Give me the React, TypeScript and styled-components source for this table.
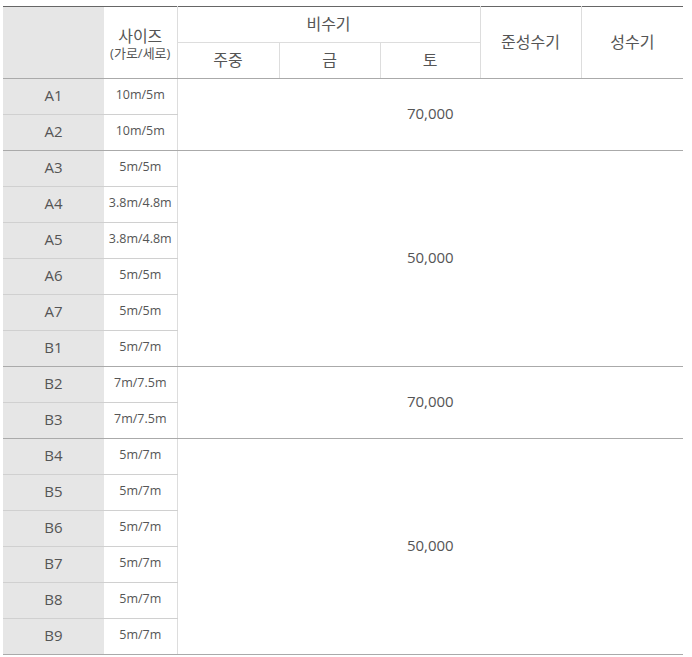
import React from "react";
import styled, { createGlobalStyle } from "styled-components";

const Global = createGlobalStyle`
  html, body { margin: 0; padding: 0; background: #fff; }
  body { font-family: "Open Sans", "Noto Sans CJK KR", sans-serif; color: #555; }
`;

const Wrap = styled.div`
  padding: 6px 9px 0 3px;
`;

const Table = styled.table`
  width: 680px;
  border-collapse: collapse;
  table-layout: fixed;
  border-top: 1px solid #666;
  border-bottom: 1px solid #666;
`;

const Th = styled.th<{ $gray?: boolean; $noRight?: boolean }>`
  height: 31px;
  padding: 0 0 4px;
  font-weight: normal;
  font-size: 16px;
  color: #555;
  text-align: center;
  vertical-align: middle;
  background: ${(p) => (p.$gray ? "#e6e6e6" : "#fff")};
  border-bottom: 1px solid #aaa;
  border-right: ${(p) => (p.$noRight ? "none" : "1px solid #ddd")};
`;

const SizeTh = styled(Th)`
  padding: 3px 0 0;
`;

const TopTh = styled(Th)`
  border-bottom: 1px solid #ddd;
`;

const Small = styled.span`
  display: block;
  font-size: 13px;
  line-height: 15px;
`;

const Big = styled.span`
  display: block;
  font-size: 16px;
  line-height: 19px;
`;

const Td = styled.td<{ $last?: boolean }>`
  height: 31px;
  padding: 0 0 4px;
  text-align: center;
  vertical-align: middle;
  border-bottom: 1px solid ${(p) => (p.$last ? "#aaa" : "#d0d0d0")};
`;

const Code = styled(Td)`
  background: #e6e6e6;
  font-size: 15px;
`;

const Size = styled(Td)`
  font-size: 12.5px;
  border-right: 1px solid #ddd;
`;

const Price = styled.td`
  padding: 0 0 4px;
  text-align: center;
  vertical-align: middle;
  font-size: 15px;
  border-bottom: 1px solid #aaa;
`;

type Group = { price: string; rows: [string, string][] };

const groups: Group[] = [
  { price: "70,000", rows: [["A1", "10m/5m"], ["A2", "10m/5m"]] },
  {
    price: "50,000",
    rows: [
      ["A3", "5m/5m"],
      ["A4", "3.8m/4.8m"],
      ["A5", "3.8m/4.8m"],
      ["A6", "5m/5m"],
      ["A7", "5m/5m"],
      ["B1", "5m/7m"],
    ],
  },
  { price: "70,000", rows: [["B2", "7m/7.5m"], ["B3", "7m/7.5m"]] },
  {
    price: "50,000",
    rows: [
      ["B4", "5m/7m"],
      ["B5", "5m/7m"],
      ["B6", "5m/7m"],
      ["B7", "5m/7m"],
      ["B8", "5m/7m"],
      ["B9", "5m/7m"],
    ],
  },
];

export default function App() {
  return (
    <>
      <Global />
      <Wrap>
        <Table>
          <colgroup>
            <col style={{ width: 101 }} />
            <col style={{ width: 73 }} />
            <col style={{ width: 102 }} />
            <col style={{ width: 101 }} />
            <col style={{ width: 100 }} />
            <col style={{ width: 101 }} />
            <col style={{ width: 102 }} />
          </colgroup>
          <thead>
            <tr>
              <Th rowSpan={2} $gray $noRight />
              <SizeTh rowSpan={2}>
                <Big>사이즈</Big>
                <Small>(가로/세로)</Small>
              </SizeTh>
              <TopTh colSpan={3}>비수기</TopTh>
              <Th rowSpan={2}>준성수기</Th>
              <Th rowSpan={2} $noRight>
                성수기
              </Th>
            </tr>
            <tr>
              <Th>주중</Th>
              <Th>금</Th>
              <Th>토</Th>
            </tr>
          </thead>
          <tbody>
            {groups.map((g, gi) =>
              g.rows.map(([code, size], ri) => {
                const last = ri === g.rows.length - 1;
                return (
                  <tr key={`${gi}-${ri}`}>
                    <Code $last={last}>{code}</Code>
                    <Size $last={last}>{size}</Size>
                    {ri === 0 && (
                      <Price colSpan={5} rowSpan={g.rows.length}>
                        {g.price}
                      </Price>
                    )}
                  </tr>
                );
              })
            )}
          </tbody>
        </Table>
      </Wrap>
    </>
  );
}
